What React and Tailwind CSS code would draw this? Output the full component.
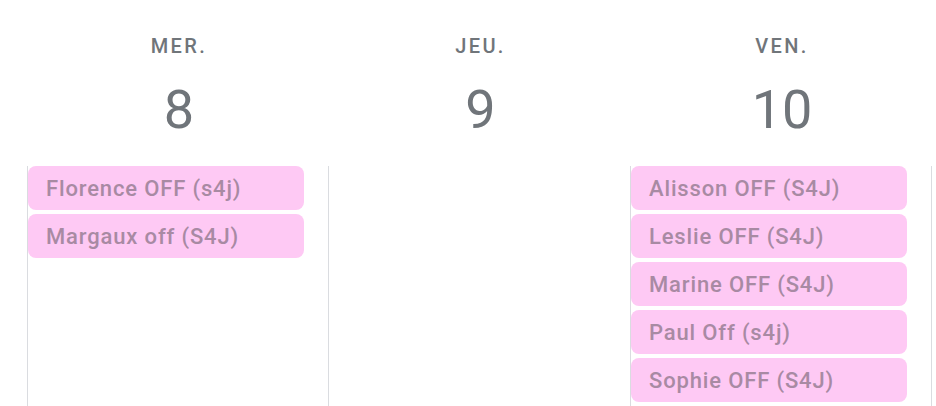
import React from 'react';

const days = [
  { label: 'MER.', num: '8', width: 'w-[301px]', events: ['Florence OFF (s4j)', 'Margaux off (S4J)'] },
  { label: 'JEU.', num: '9', width: 'w-[302px]', events: [] },
  {
    label: 'VEN.',
    num: '10',
    width: 'w-[301px]',
    events: [
      'Alisson OFF (S4J)',
      'Leslie OFF (S4J)',
      'Marine OFF (S4J)',
      'Paul Off (s4j)',
      'Sophie OFF (S4J)'
    ]
  }
];

export default function App() {
  return (
    <div
      className="flex h-[406px] w-[936px] overflow-hidden bg-white pl-[27px]"
      style={{ fontFamily: 'Roboto, "Noto Sans", sans-serif' }}
    >
      {days.map((day) => (
        <div key={day.label} className={`flex ${day.width} shrink-0 flex-col`}>
          {/* Header */}
          <div className="flex h-[166px] flex-col items-center pl-[3px] text-[#70757a]">
            <div className="mt-[36px] text-[20px] font-medium leading-[20px] tracking-[2.4px]">
              {day.label}
            </div>
            <div className="mt-[27px] text-[54px] font-normal leading-[54px]">
              {day.num}
            </div>
          </div>

          {/* Events */}
          <div className="flex flex-1 flex-col gap-[4px] border-l border-[#dadce0] pr-[24px]">
            {day.events.map((ev) => (
              <div
                key={ev}
                className="flex h-[44px] items-center rounded-[8px] bg-[#fec9f4] pl-[18px] text-[22px] font-medium tracking-[0.85px] text-[#a88aa3]"
              >
                {ev}
              </div>
            ))}
          </div>
        </div>
      ))}
      <div className="flex w-[301px] shrink-0 flex-col">
        <div className="h-[166px]" />
        <div className="flex-1 border-l border-[#dadce0]" />
      </div>
    </div>
  );
}
